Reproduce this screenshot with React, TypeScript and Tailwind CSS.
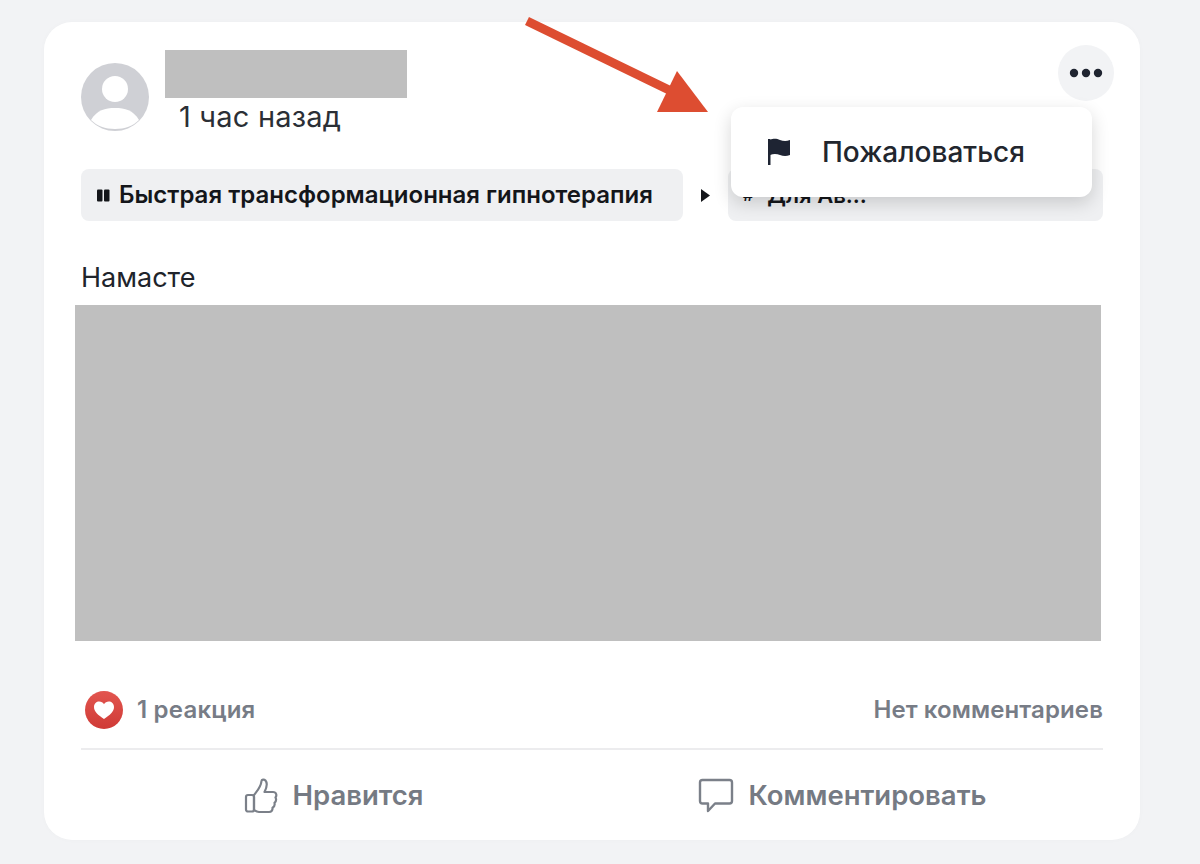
function Avatar() {
  return (
    <svg className="w-[68px] h-[68px] shrink-0" viewBox="0 0 68 68">
      <circle cx="34" cy="34" r="34" fill="#cfd0d5" />
      <circle cx="34" cy="26" r="13" fill="#fff" />
      <path d="M10 57 C16 47 24 45 34 45 C44 45 52 47 58 57 C52 63 44 66 34 66 C24 66 16 63 10 57 Z" fill="#fff" />
    </svg>
  );
}

function Arrow() {
  return (
    <svg className="absolute left-[480px] top-[-6px] w-[190px] h-[100px]" viewBox="0 0 190 100">
      <path d="M3 5 L145 74" stroke="#dd4d31" strokeWidth="9" fill="none" />
      <path d="M153 55 L184 96 L133 96 Z" fill="#dd4d31" />
    </svg>
  );
}

export default function App() {
  return (
    <div className="w-[1200px] h-[864px] overflow-hidden bg-[#f2f3f5] pt-[22px] pl-[44px] font-['Inter',sans-serif]">
      <div className="relative w-[1096px] h-[818px] rounded-[28px] bg-white px-[37px] pt-[28px] shadow-[0_0_6px_rgba(0,0,0,0.02)]">
        <Arrow />

        <div className="flex items-start justify-between">
          <div className="flex gap-4">
            <div className="pt-[13px]">
              <Avatar />
            </div>
            <div>
              <div className="w-[242px] h-[48px] bg-[#bfbfbf]" />
              <div className="ml-[14px] mt-[2px] text-[29px] leading-[33px] tracking-[0.2px] text-[#2b2f36]">1 час назад</div>
            </div>
          </div>
          <button className="-mt-[5px] -mr-[11px] flex h-[56px] w-[56px] items-center justify-center rounded-full bg-[#f2f3f5]">
            <svg className="w-[36px] h-[10px]" viewBox="0 0 36 10" fill="#1f2430">
              <circle cx="6" cy="5" r="4.2" />
              <circle cx="18" cy="5" r="4.2" />
              <circle cx="30" cy="5" r="4.2" />
            </svg>
          </button>
        </div>

        <div className="mt-[36px] flex items-center">
          <div className="flex h-[52px] w-[602px] items-center gap-[9px] rounded-lg bg-[#eff0f2] pl-[16px]">
            <svg className="w-[13px] h-[13px] shrink-0" viewBox="0 0 13 13" fill="#14161a">
              <rect x="0" y="0.5" width="5.5" height="12" rx="1" />
              <rect x="7" y="0.5" width="5.5" height="12" rx="1" />
            </svg>
            <span className="text-[24px] font-semibold text-[#14161a] whitespace-nowrap">Быстрая трансформационная гипнотерапия</span>
          </div>
          <svg className="mx-[17px] w-[11px] h-[15px] shrink-0" viewBox="0 0 11 15" fill="#14161a">
            <path d="M1 1 L10 7.5 L1 14 Z" />
          </svg>
          <div className="flex h-[52px] flex-1 items-center gap-[14px] rounded-lg bg-[#eff0f2] pl-[15px]">
            <span className="text-[16px] font-semibold text-[#14161a]">#</span>
            <span className="text-[22px] font-semibold text-[#14161a]">Для Ав...</span>
          </div>
        </div>

        <div className="mt-[40px] text-[27px] leading-[34px] text-[#20242b]">Намасте</div>
        <div className="-ml-[6px] mt-[10px] h-[336px] w-[1026px] bg-[#bfbfbf]" />

        <div className="mt-[50px] flex items-center justify-between">
          <div className="flex items-center gap-[14px] pl-[4px]">
            <div className="flex h-[38px] w-[38px] items-center justify-center rounded-full bg-gradient-to-b from-[#e2554f] to-[#cf3a36]">
              <svg className="w-[24px] h-[22px]" viewBox="0 0 24 22" fill="#fff">
                <path d="M12 20 C6 16 2 12.5 2 8 C2 4.5 4.6 2.5 7.2 2.5 C9.2 2.5 11 3.5 12 5.2 C13 3.5 14.8 2.5 16.8 2.5 C19.4 2.5 22 4.5 22 8 C22 12.5 18 16 12 20 Z" />
              </svg>
            </div>
            <span className="text-[24px] leading-[36px] tracking-[0.2px] font-semibold text-[#777c86]">1 реакция</span>
          </div>
          <span className="text-[24px] leading-[36px] tracking-[0.1px] font-semibold text-[#777c86]">Нет комментариев</span>
        </div>

        <div className="mt-[19px] h-[2px] bg-[#ececee]" />

        <div className="mt-[26px] flex items-center text-[27.5px] leading-[39px] font-semibold text-[#757a83]">
          <div className="flex w-[506px] items-center justify-center gap-[14px]">
            <svg className="w-[34px] h-[36px]" viewBox="0 0 34 36" fill="none" stroke="#7b8089" strokeWidth="2.2" strokeLinejoin="round">
              <path d="M10 17 C14 12 17 9 17.5 3 C17.6 1.5 20 1 21.5 2.5 C23.5 5 22.5 10 20.5 14 L29 14 C32.5 14 33 17.5 31.5 19.5 C32.5 21.5 32 23.5 30.5 24.8 C31 27 30 29 28.5 29.8 C28.8 32 27.5 34 25 34 L15 34 C12.5 34 11.5 33 10 32 Z" />
              <rect x="2" y="17" width="8" height="16.5" rx="2" />
            </svg>
            <span>Нравится</span>
          </div>
          <div className="flex flex-1 items-center justify-center gap-[15px] pr-[6px]">
            <svg className="w-[36px] h-[36px]" viewBox="0 0 36 36" fill="none" stroke="#7b8089" strokeWidth="2.4" strokeLinejoin="round">
              <path d="M4.5 2 H31.5 C33 2 34 3 34 4.5 V23 C34 24.5 33 25.5 31.5 25.5 H17 L10 33 V25.5 H4.5 C3 25.5 2 24.5 2 23 V4.5 C2 3 3 2 4.5 2 Z" />
            </svg>
            <span>Комментировать</span>
          </div>
        </div>

        <div className="absolute left-[687px] top-[85px] flex h-[90px] w-[361px] items-center gap-[31px] rounded-xl bg-white pl-[36px] shadow-[0_6px_18px_rgba(0,0,0,0.16)]">
          <svg className="w-[24px] h-[28px] shrink-0" viewBox="0 0 24 28" fill="#1e2433">
            <path d="M1 1 H3.5 V27 H1 Z" />
            <path d="M3 2 C7 0 10 1 13 2 C16 3 19 3.5 23 2 V17 C19 18.5 16 18 13 17 C10 16 7 15.5 3 17 Z" />
          </svg>
          <span className="text-[28px] font-medium text-[#22262e] whitespace-nowrap">Пожаловаться</span>
        </div>
      </div>
    </div>
  );
}
